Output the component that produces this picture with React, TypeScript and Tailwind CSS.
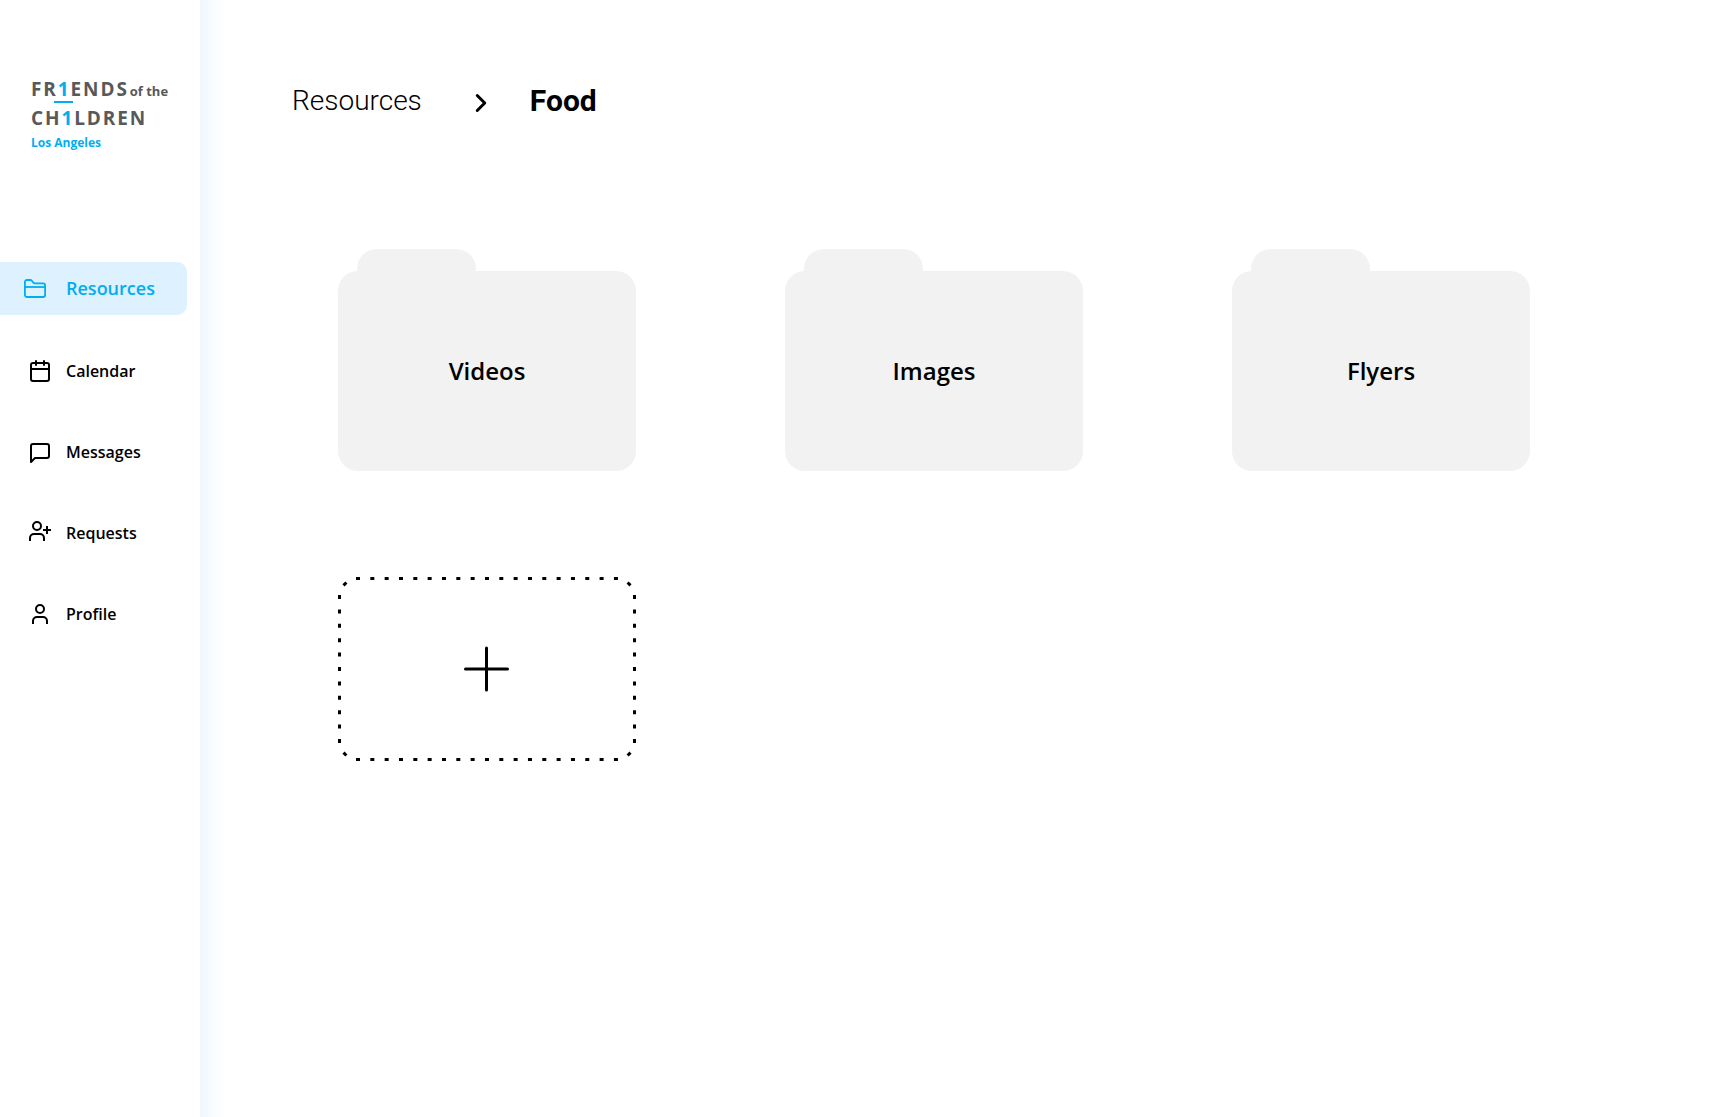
import type { ReactNode } from "react";
import { Calendar, ChevronRight } from "lucide-react";

function FolderIcon() {
  return (
    <svg viewBox="0 0 24 24" className="size-6" fill="none" stroke="currentColor" strokeWidth="1.8" strokeLinejoin="round" aria-hidden="true">
      <path d="M1.9 18V5a2 2 0 0 1 2-2h3.4a2 2 0 0 1 1.5.7l1.6 2a2 2 0 0 0 1.5.7h8.2a2 2 0 0 1 2 2V18a2 2 0 0 1-2 2H3.9a2 2 0 0 1-2-2z" />
      <path d="M1.9 10h20.2" />
    </svg>
  );
}

function MessageIcon() {
  return (
    <svg viewBox="0 -1 24 24" className="size-6" fill="none" stroke="currentColor" strokeWidth="2" strokeLinecap="round" strokeLinejoin="round" aria-hidden="true">
      <path d="M21 15a2 2 0 0 1-2 2H7l-4 4V5a2 2 0 0 1 2-2h14a2 2 0 0 1 2 2z" />
    </svg>
  );
}

function RequestIcon() {
  return (
    <svg viewBox="0 2 24 24" className="size-6 overflow-visible" fill="none" stroke="currentColor" strokeWidth="2" aria-hidden="true">
      <path d="M16 22v-3a4 4 0 0 0-4-4H6a4 4 0 0 0-4 4v3" />
      <circle cx="9" cy="7" r="4" />
      <path d="M19 7v8M15 11h8" />
    </svg>
  );
}

function ProfileIcon() {
  return (
    <svg viewBox="0 0 24 24" className="size-6" fill="none" stroke="currentColor" strokeWidth="2" aria-hidden="true">
      <path d="M19 22v-3a4 4 0 0 0-4-4H9a4 4 0 0 0-4 4v3" />
      <circle cx="12" cy="7" r="4" />
    </svg>
  );
}

function Logo() {
  return (
    <a href="#" className="block pl-[31px] font-bold text-[#58595b]">
      <span className="flex items-baseline gap-px text-[19px] leading-[27px] whitespace-nowrap">
        <span className="tracking-widest">
          FR<span className="relative text-[#00aeef]">1<span className="absolute -bottom-px -left-1 h-[2px] w-[19px] bg-[#00aeef]" /></span>ENDS
        </span>
        <span className="text-[13px]">of the</span>
      </span>
      <span className="block text-[19px] leading-[27px] tracking-widest">
        CH<span className="text-[#00aeef]">1</span>LDREN
      </span>
      <span className="block text-[12px] leading-[22px] text-[#00aeef]">Los Angeles</span>
    </a>
  );
}

function NavLink({ icon, label }: { icon: ReactNode; label: string }) {
  return (
    <a href="#" className="flex h-[81px] items-center gap-[14px] pl-7 text-[16px] font-semibold">
      {icon}
      {label}
    </a>
  );
}

function Folder({ name }: { name: string }) {
  return (
    <button type="button" className="flex flex-col items-start">
      <span className="ml-[19px] h-[22px] w-[119px] rounded-t-[20px] bg-[#f2f2f2]" />
      <span className="flex h-[200px] w-full items-center justify-center rounded-[20px] bg-[#f2f2f2] text-[24px] font-semibold">
        {name}
      </span>
    </button>
  );
}

export default function App() {
  return (
    <div className="flex min-h-screen bg-white font-['Open_Sans',sans-serif] text-black">
      <aside className="w-[200px] shrink-0 bg-white pt-[76px]">
        <Logo />
        <nav className="mt-[108px]">
          <a
            href="#"
            aria-current="page"
            className="mr-[13px] mb-[15px] flex h-[53px] items-center gap-[19px] rounded-r-[10px] bg-[#ddf1ff] pl-[23px] text-[18px] font-semibold text-[#00aeef]"
          >
            <FolderIcon />
            Resources
          </a>
          <NavLink icon={<Calendar className="size-6" />} label="Calendar" />
          <NavLink icon={<MessageIcon />} label="Messages" />
          <NavLink icon={<RequestIcon />} label="Requests" />
          <NavLink icon={<ProfileIcon />} label="Profile" />
        </nav>
      </aside>
      <div className="w-7 shrink-0 bg-linear-to-r from-[#eef7ff] via-[#f9fdff] to-white" />

      <main className="min-w-0 flex-1 pt-20">
        <nav aria-label="Breadcrumb" className="flex items-center pl-16 font-[Roboto,sans-serif] leading-[42px]">
          <a href="#" className="text-[28px] font-light">Resources</a>
          <ChevronRight className="mt-1 mr-[34px] ml-[44px] size-[30px]" strokeWidth={2.4} />
          <h1 className="text-[30px] font-bold">Food</h1>
        </nav>

        <div className="mt-[127px] grid grid-cols-[repeat(auto-fill,298px)] gap-x-[149px] gap-y-[106px] pl-[110px]">
          <Folder name="Videos" />
          <Folder name="Images" />
          <Folder name="Flyers" />
          <button type="button" aria-label="Add folder" className="h-[184px]">
            <svg viewBox="0 0 298 184" className="size-full" fill="none" stroke="currentColor" strokeWidth="3" aria-hidden="true">
              <path d="M18 1.5H280M18 182.5H280" strokeDasharray="4 10.33" />
              <path d="M1.5 18V166M296.5 18V166" strokeDasharray="4 10.4" />
              <path d="M5.5 8.4l2.9-2.9M289.6 5.5l2.9 2.9M5.5 175.6l2.9 2.9M289.6 178.5l2.9-2.9" />
              <path d="M148.5 71v42M127.5 92h42" strokeLinecap="round" />
            </svg>
          </button>
        </div>
      </main>
    </div>
  );
}
